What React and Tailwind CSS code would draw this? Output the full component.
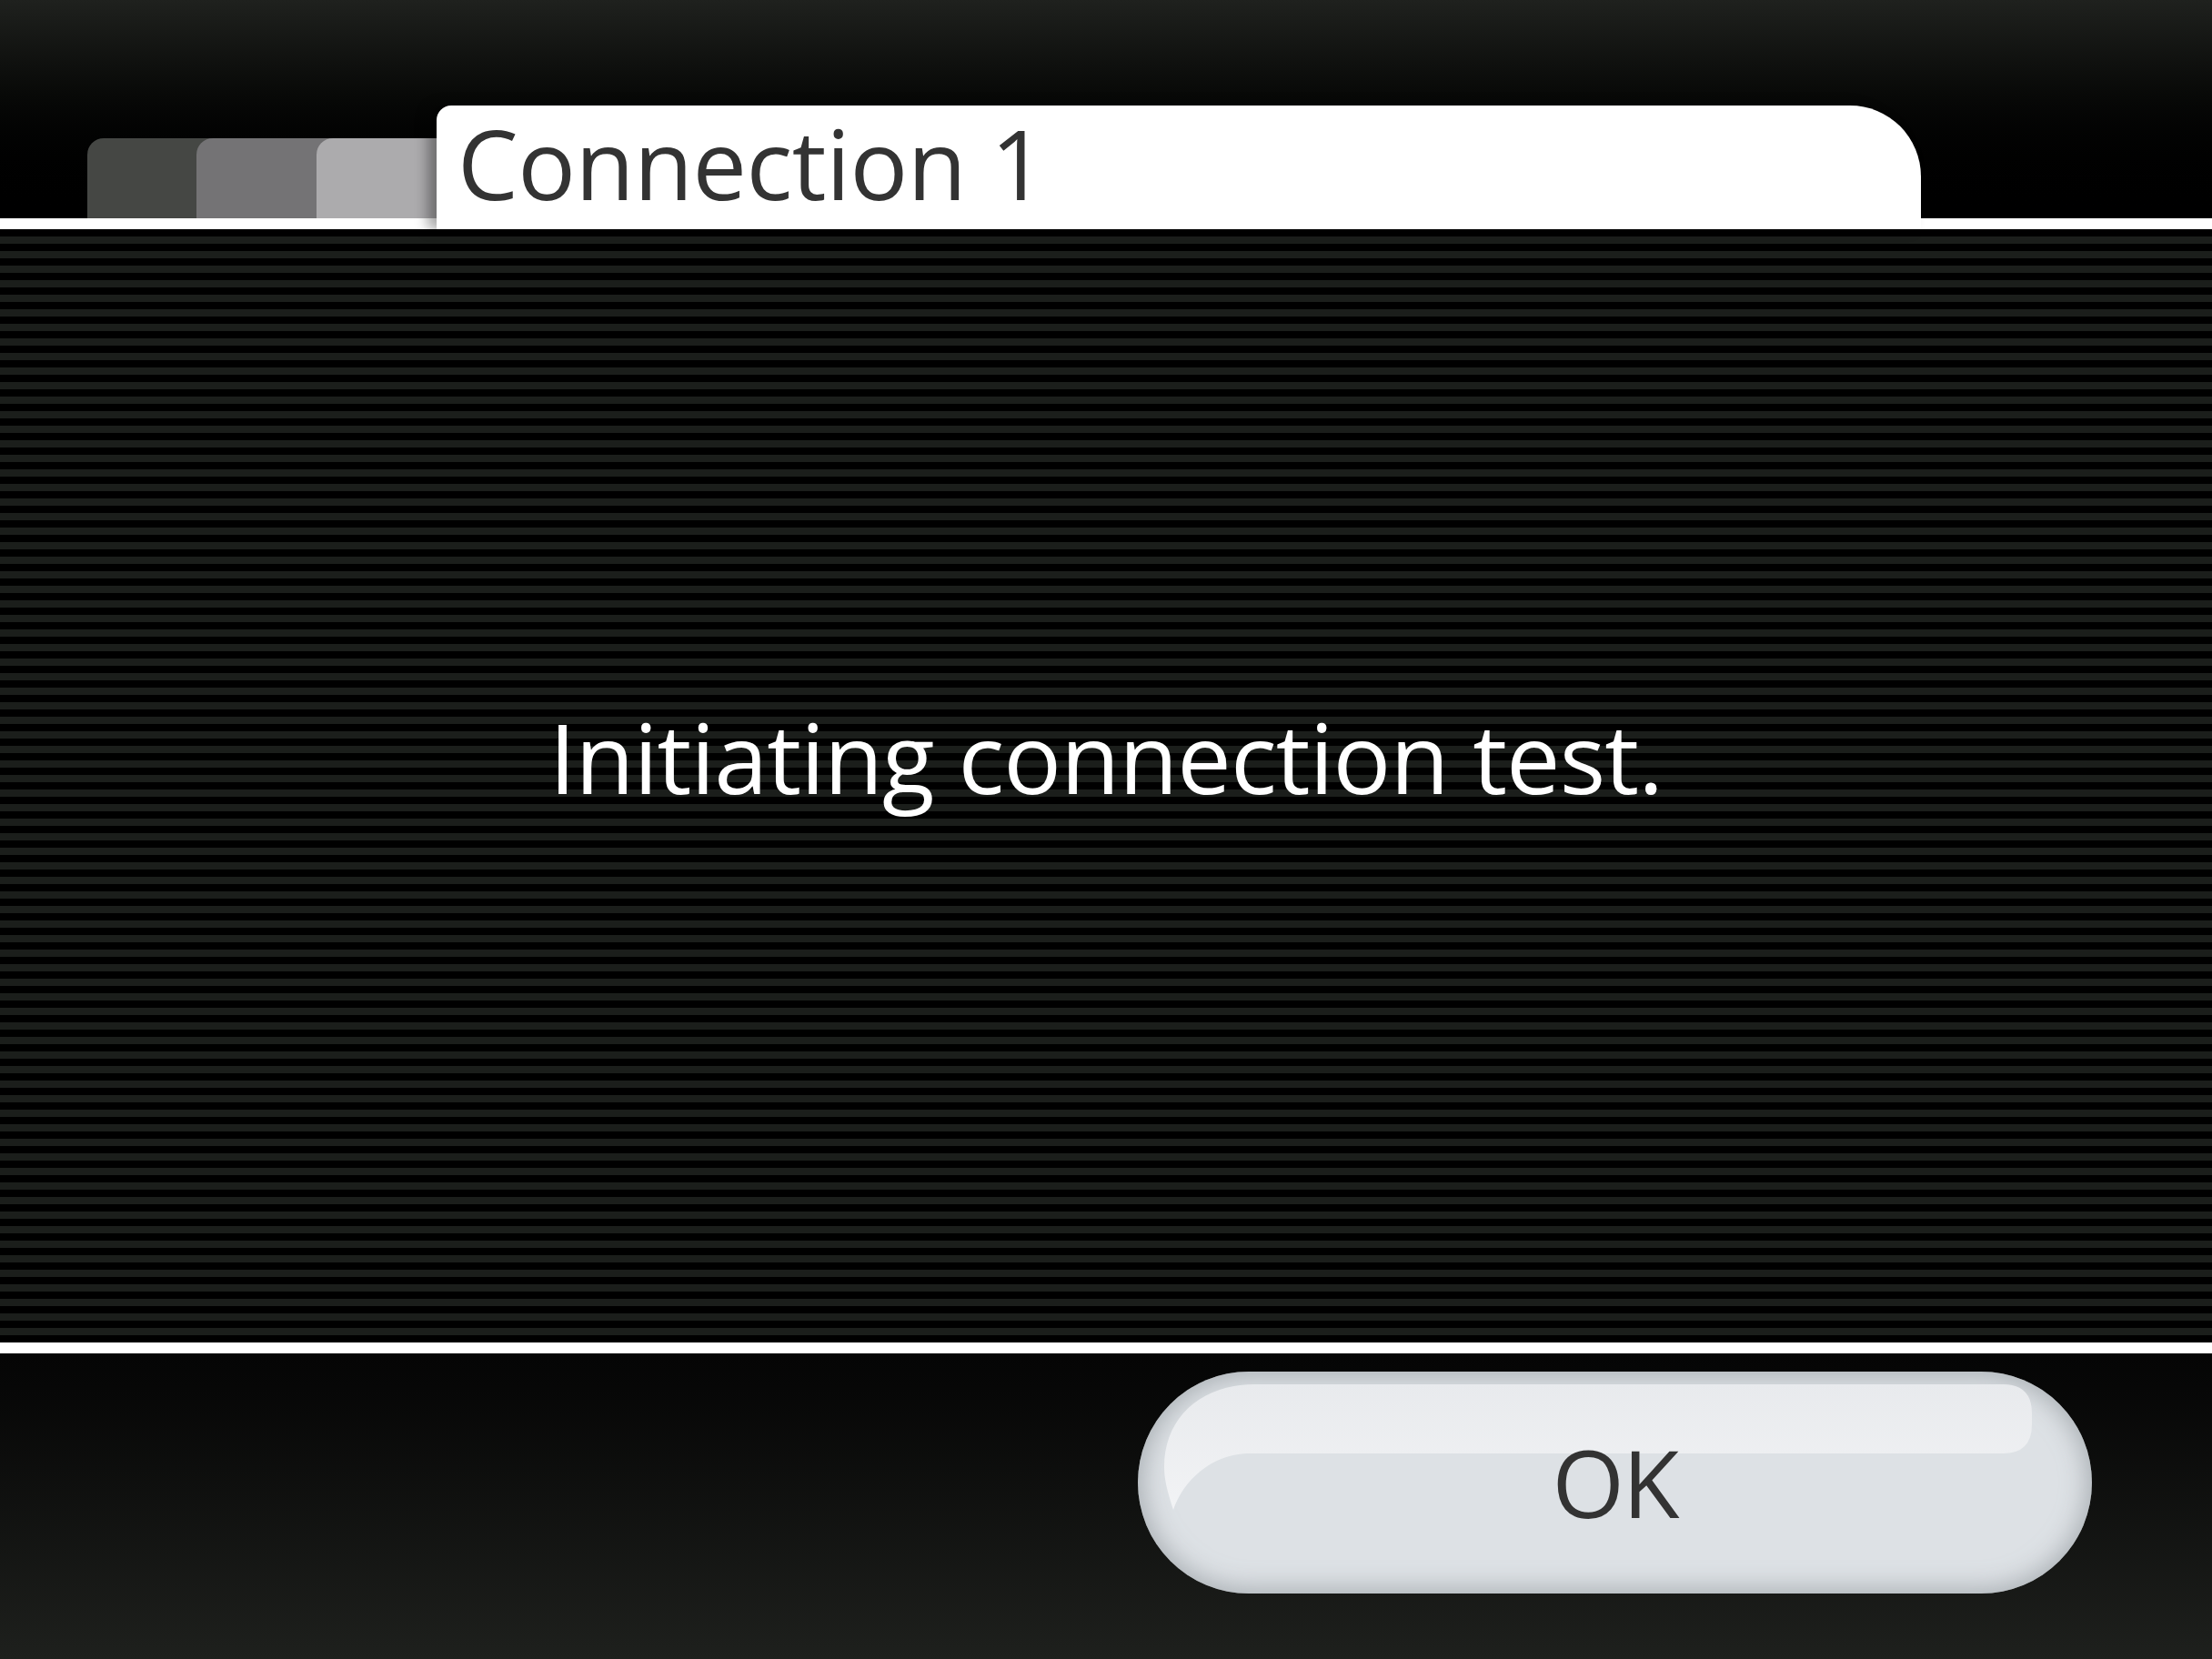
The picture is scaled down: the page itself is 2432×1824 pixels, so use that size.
export default function App() {
  return (
    <div className="w-[2432px] h-[1824px] flex flex-col overflow-hidden font-['Open_Sans',sans-serif]">
      {/* header with tabs */}
      <div className="relative z-10 h-[240px] flex items-end pl-[96px] bg-linear-to-b from-[#1f211e] to-black">
        <div className="flex items-end h-[88px]">
          <div className="h-full w-[120px] bg-[#454744] rounded-tl-[18px]" />
          <div className="h-full w-[132px] bg-[#454744]">
            <div className="h-full w-full bg-[#747375] rounded-tl-[18px]" />
          </div>
          <div className="h-full w-[132px] bg-[#747375]">
            <div className="h-full w-full bg-[#acabad] rounded-tl-[18px]" />
          </div>
        </div>
        <div className="h-[136px] w-[1632px] -mb-[12px] bg-white rounded-tl-[16px] rounded-tr-[78px] shadow-[-10px_0_14px_rgba(0,0,0,0.35)] pl-[23px] pt-[10px]">
          <span className="text-[106px] leading-none tracking-[-0.5px] text-[#333333]">Connection 1</span>
        </div>
      </div>
      <div className="h-[12px] bg-white" />

      {/* striped message area */}
      <div className="h-[1224px] flex justify-center pt-[527px] bg-[image:repeating-linear-gradient(to_bottom,#000_0px,#000_8px,#1b1e1b_8px,#1b1e1b_16px)]">
        <p className="text-[106px] leading-none tracking-[-0.9px] text-white">Initiating connection test.</p>
      </div>
      <div className="h-[12px] bg-white" />

      {/* footer */}
      <div className="flex-1 flex justify-end pt-[20px] pr-[132px] bg-linear-to-b from-[#050505] to-[#1e201d]">
        <button className="relative w-[1049px] h-[244px] rounded-full bg-[#dde1e5] shadow-[inset_0_0_26px_6px_rgba(140,146,152,0.6)] flex items-center justify-center">
          <svg className="absolute inset-0" width="1049" height="244" viewBox="0 0 1049 244">
            <defs>
              <linearGradient id="gloss" x1="0" y1="0" x2="0" y2="1">
                <stop offset="0" stopColor="#e8eaed" />
                <stop offset="1" stopColor="#f2f3f5" />
              </linearGradient>
            </defs>
            <path
              d="M 129 14 L 951 14 Q 983 14 983 46 L 983 58 Q 983 90 951 90 L 119 90 C 80 92 50 120 39 152 C 32 130 29 118 29 105 C 29 50 70 14 129 14 Z"
              fill="url(#gloss)"
            />
          </svg>
          <span className="relative text-[102px] leading-none tracking-[-2px] text-[#333333]">OK</span>
        </button>
      </div>
    </div>
  );
}
